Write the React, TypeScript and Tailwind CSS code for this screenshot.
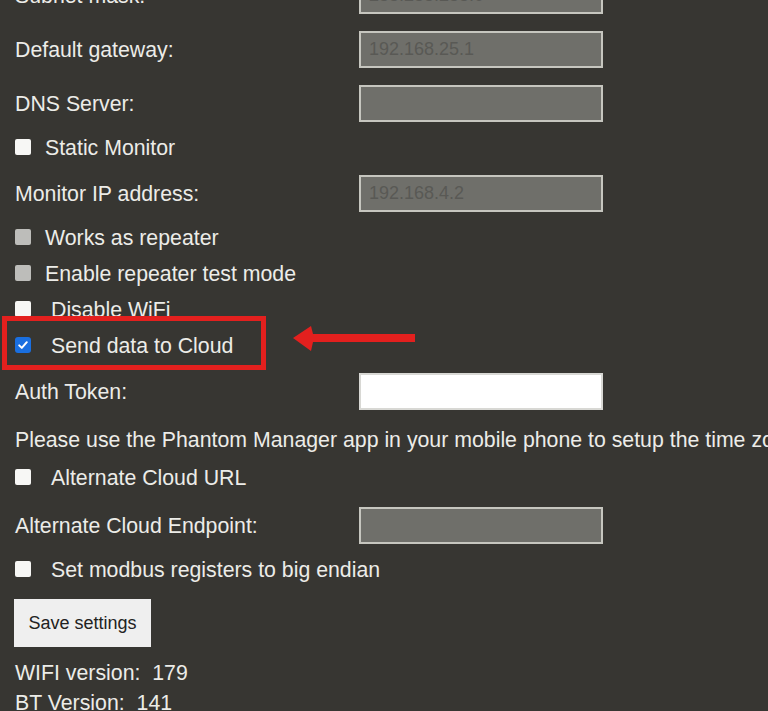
import React from "react";

const font = { fontFamily: '"Liberation Sans", Arial, sans-serif' };

function Box({ kind }: { kind: "white" | "grey" | "checked" }) {
  if (kind === "checked") {
    return (
      <span className="flex h-[16px] w-[16px] shrink-0 items-center justify-center rounded-[3px] bg-[#1a6fe0]">
        <svg width="12" height="12" viewBox="0 0 12 12">
          <path d="M2.2 6.4 L4.8 8.9 L9.8 3.2" fill="none" stroke="#fff" strokeWidth="2" strokeLinecap="round" strokeLinejoin="round" />
        </svg>
      </span>
    );
  }
  return (
    <span
      className={
        "block h-[16px] w-[16px] shrink-0 rounded-[2px] " +
        (kind === "white" ? "bg-[#f7f7f5]" : "bg-[#bdbdba]")
      }
    />
  );
}

function InputRow({
  label,
  value,
  white,
  className,
}: {
  label: string;
  value?: string;
  white?: boolean;
  className?: string;
}) {
  return (
    <div className={"flex h-[37px] items-center " + (className ?? "")}>
      <div className="w-[344px] shrink-0 pt-[3px]">{label}</div>
      <div
        className={
          "flex h-[37px] w-[244px] items-center border-2 pl-[8px] text-[18px] " +
          (white
            ? "border-[#d8d8d4] bg-[#ffffff] text-[#333]"
            : "border-[#c6c6bf] bg-[#6f6f6a] text-[#595955]")
        }
      >
        {value}
      </div>
    </div>
  );
}

function CheckRow({
  label,
  kind,
  gap,
  className,
  children,
}: {
  label: string;
  kind: "white" | "grey" | "checked";
  gap: string;
  className?: string;
  children?: React.ReactNode;
}) {
  return (
    <div className={"relative flex h-[36px] items-center " + (className ?? "")}>
      <Box kind={kind} />
      <span className={"pt-[3px] " + gap}>{label}</span>
      {children}
    </div>
  );
}

export default function App() {
  return (
    <div
      className="relative h-[711px] w-[768px] overflow-hidden bg-[#373632] text-[21.3px] text-[#ecece8]"
      style={font}
    >
      <div className="mt-[-23px] flex flex-col pl-[15px] whitespace-nowrap">
        <InputRow label="Subnet mask:" value="255.255.255.0" />
        <InputRow label="Default gateway:" value="192.168.25.1" className="mt-[17px]" />
        <InputRow label="DNS Server:" value="" className="mt-[17px]" />
        <CheckRow label="Static Monitor" kind="white" gap="ml-[14px]" className="mt-[7px]" />
        <InputRow label="Monitor IP address:" value="192.168.4.2" className="mt-[10px]" />
        <CheckRow label="Works as repeater" kind="grey" gap="ml-[14px]" className="mt-[7px]" />
        <CheckRow label="Enable repeater test mode" kind="grey" gap="ml-[14px]" className="h-[35px]" />
        <CheckRow label="Disable WiFi" kind="white" gap="ml-[20px]" className="h-[35px]" />
        <CheckRow label="Send data to Cloud" kind="checked" gap="ml-[20px]" className="h-[36px]">
          <div className="absolute left-[-13px] top-[-11px] h-[54px] w-[264px] border-[5px] border-[#e3201e]" />
          <svg
            className="absolute left-[276px] top-[-3px]"
            width="128"
            height="30"
            viewBox="0 0 128 30"
          >
            <path d="M2 14 L20 2 L22 10 L124 10 L124 18 L22 18 L20 27 Z" fill="#e3201e" />
          </svg>
        </CheckRow>
        <InputRow label="Auth Token:" value="" white className="mt-[10px] h-[35px]" />
        <div className="mt-[11px] flex h-[36px] items-center pt-[3px]">
          Please use the Phantom Manager app in your mobile phone to setup the time zone.
        </div>
        <CheckRow label="Alternate Cloud URL" kind="white" gap="ml-[20px]" className="mt-[2px]" />
        <InputRow label="Alternate Cloud Endpoint:" value="" className="mt-[12px] h-[35px]" />
        <CheckRow label="Set modbus registers to big endian" kind="white" gap="ml-[20px]" className="mt-[7px]" />
        <div className="mt-[12px]">
          <button
            className="ml-[-1px] h-[48px] w-[137px] bg-[#efefef] text-[18px] text-[#222]"
            style={font}
          >
            Save settings
          </button>
        </div>
        <div className="mt-[10px] flex h-[30px] items-center whitespace-pre pt-[3px]">WIFI version:  179</div>
        <div className="flex h-[30px] items-center whitespace-pre pt-[3px]">BT Version:  141</div>
      </div>
    </div>
  );
}
